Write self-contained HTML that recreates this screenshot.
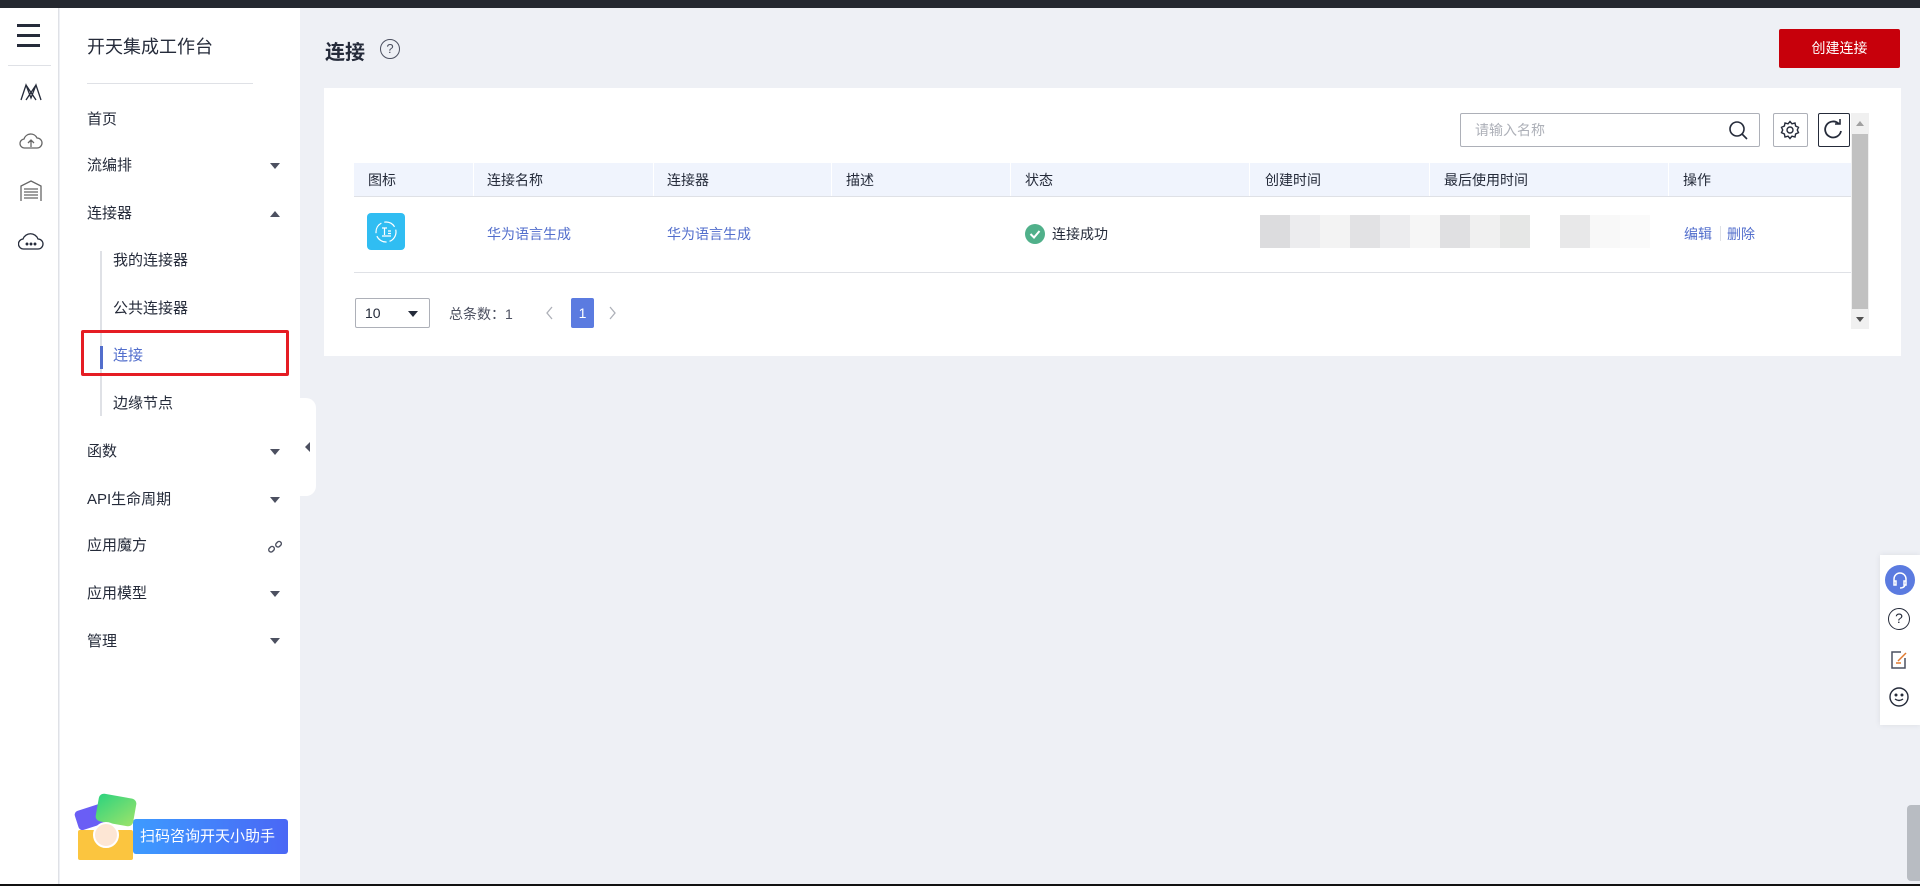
<!DOCTYPE html>
<html><head><meta charset="utf-8"><style>
*{margin:0;padding:0;box-sizing:border-box}
body{width:1920px;height:886px;overflow:hidden;background:#eef0f5;font-family:"Liberation Sans","Noto Sans CJK SC",sans-serif;color:#252b3a;position:relative}
.a{position:absolute}
.top{left:0;top:0;width:1920px;height:8px;background:#252830}
.bot{left:0;top:884px;width:1920px;height:2px;background:#111}
.rail{left:0;top:8px;width:59px;height:876px;background:#fff;border-right:1px solid #dfe1e6}
.side{left:60px;top:8px;width:240px;height:876px;background:#fff}
.mi{position:absolute;left:87px;font-size:15px;color:#252b3a;line-height:20px}
.si{position:absolute;left:113px;font-size:15px;color:#252b3a;line-height:20px}
.ar{position:absolute;left:270px;width:0;height:0;border-left:5px solid transparent;border-right:5px solid transparent;border-top:6px solid #4c5060}
.au{border-top:0;border-bottom:6px solid #4c5060}
.th{position:absolute;top:163px;height:34px;line-height:34px;font-size:14px;color:#252b3a}
.card{left:324px;top:88px;width:1577px;height:268px;background:#fff}
.lk{color:#526ecc;font-size:14px}
.bl{position:absolute;top:215px;height:33px;width:30px}
</style></head><body>
<div class="a top"></div>
<div class="a rail"></div>
<div class="a side"></div>
<div class="a" style="left:17px;top:24px;width:23px;height:3px;background:#252b3a"></div>
<div class="a" style="left:17px;top:34px;width:23px;height:3px;background:#252b3a"></div>
<div class="a" style="left:17px;top:44px;width:23px;height:3px;background:#252b3a"></div>
<div class="a" style="left:8px;top:65px;width:43px;height:1px;background:#dfe1e6"></div>
<svg class="a" style="left:19px;top:82px" width="24" height="20" viewBox="0 0 24 20" fill="none" stroke="#252b3a" stroke-width="1.3"><path d="M2 18 L7 3 L12 16 L17 3 L22 18 M7 3 L17 18 M17 3 L7 18"/></svg>
<svg class="a" style="left:19px;top:131px" width="24" height="20" viewBox="0 0 24 20" fill="none" stroke="#666" stroke-width="1.3"><path d="M6 17 H18 A5 5 0 0 0 18 7 A7 7 0 0 0 5 8 A4.5 4.5 0 0 0 6 17Z M12 16 V10 M9 12 L12 9 L15 12"/></svg>
<svg class="a" style="left:19px;top:180px" width="24" height="22" viewBox="0 0 24 22" fill="none" stroke="#666" stroke-width="1.3"><path d="M2 21 V6 L12 1 L22 6 V21 M5 9 H19 M5 12 H19 M5 15 H19 M5 18 H19"/></svg>
<svg class="a" style="left:18px;top:231px" width="26" height="20" viewBox="0 0 26 20" fill="none" stroke="#252b3a" stroke-width="1.3"><path d="M6 18 H20 A5 5 0 0 0 20 8 A8 8 0 0 0 5 8 A5 5 0 0 0 6 18Z"/><circle cx="9" cy="13" r=".8" fill="#252b3a"/><circle cx="13" cy="13" r=".8" fill="#252b3a"/><circle cx="17" cy="13" r=".8" fill="#252b3a"/></svg>
<div class="a" style="left:87px;top:33px;font-size:18px;color:#252b3a">开天集成工作台</div>
<div class="a" style="left:87px;top:83px;width:166px;height:1px;background:#dfe1e6"></div>
<div class="mi" style="top:110px">首页</div>
<div class="mi" style="top:156px">流编排</div><div class="ar" style="top:163px"></div>
<div class="mi" style="top:204px">连接器</div><div class="ar au" style="top:211px"></div>
<div class="a" style="left:100px;top:251px;width:2px;height:165px;background:#dfe1e6"></div>
<div class="si" style="top:251px">我的连接器</div>
<div class="si" style="top:299px">公共连接器</div>
<div class="a" style="left:100px;top:346px;width:3px;height:23px;background:#526ecc"></div>
<div class="si" style="top:346px;color:#526ecc">连接</div>
<div class="a" style="left:81px;top:330px;width:208px;height:46px;border:3px solid #e51c23;border-radius:2px"></div>
<div class="si" style="top:394px">边缘节点</div>
<div class="mi" style="top:442px">函数</div><div class="ar" style="top:449px"></div>
<div class="mi" style="top:490px">API生命周期</div><div class="ar" style="top:497px"></div>
<div class="mi" style="top:536px">应用魔方</div>
<svg class="a" style="left:267px;top:539px" width="16" height="16" viewBox="0 0 16 16" fill="none" stroke="#4c5060" stroke-width="1.4"><rect x="1.5" y="8" width="6" height="4.5" rx="2.2" transform="rotate(-45 4.5 10.2)"/><rect x="8.5" y="3" width="6" height="4.5" rx="2.2" transform="rotate(-45 11.5 5.2)"/></svg>
<div class="mi" style="top:584px">应用模型</div><div class="ar" style="top:591px"></div>
<div class="mi" style="top:632px">管理</div><div class="ar" style="top:638px"></div>
<div class="a" style="left:300px;top:398px;width:16px;height:98px;background:#fff;border-radius:0 10px 10px 0"></div>
<div class="a" style="left:305px;top:442px;width:0;height:0;border-top:5px solid transparent;border-bottom:5px solid transparent;border-right:5px solid #4c5060"></div>
<div class="a" style="left:133px;top:819px;width:155px;height:35px;border-radius:3px;background:linear-gradient(90deg,#3d9bff,#4a67f5);color:#fff;font-size:15px;line-height:35px;padding-left:7px">扫码咨询开天小助手</div>
<div class="a" style="left:76px;top:807px;width:30px;height:20px;background:#6a5ef5;border-radius:4px;transform:rotate(-18deg)"></div>
<div class="a" style="left:97px;top:796px;width:38px;height:28px;background:linear-gradient(135deg,#2dd37e,#9de36a);border-radius:5px;transform:rotate(10deg)"></div>
<div class="a" style="left:78px;top:830px;width:55px;height:30px;background:#fbc53f;border-radius:2px"></div>
<div class="a" style="left:93px;top:822px;width:26px;height:26px;border-radius:50%;background:#fde6d4;border:2px solid #fff"></div>
<div class="a" style="left:325px;top:36px;font-size:20px;font-weight:bold;color:#252b3a">连接</div>
<div class="a" style="left:380px;top:39px;width:20px;height:20px;border:1.5px solid #4c5060;border-radius:50%;font-size:13px;text-align:center;line-height:17px;color:#4c5060">?</div>
<div class="a" style="left:1779px;top:29px;width:121px;height:39px;background:#c7000b;border-radius:2px;color:#fff;font-size:14px;text-align:center;line-height:39px">创建连接</div>
<div class="a card"></div>
<div class="a" style="left:1460px;top:113px;width:300px;height:34px;border:1px solid #adb0b8;border-radius:2px;font-size:14px;color:#adb0b8;line-height:32px;padding-left:14px">请输入名称</div>
<svg class="a" style="left:1727px;top:119px" width="22" height="22" viewBox="0 0 22 22" fill="none" stroke="#252b3a" stroke-width="1.6"><circle cx="10" cy="10" r="7"/><path d="M15 15 L20 20"/></svg>
<div class="a" style="left:1773px;top:113px;width:35px;height:34px;border:1px solid #adb0b8;border-radius:2px"></div>
<svg class="a" style="left:1780px;top:120px" width="20" height="20" viewBox="0 0 20 20" fill="none" stroke="#252b3a" stroke-width="1.4"><circle cx="10" cy="10" r="3"/><path d="M10 1.5 L12 3.8 L15 3 L15.6 6 L18.5 7.3 L17.3 10 L18.5 12.7 L15.6 14 L15 17 L12 16.2 L10 18.5 L8 16.2 L5 17 L4.4 14 L1.5 12.7 L2.7 10 L1.5 7.3 L4.4 6 L5 3 L8 3.8Z"/></svg>
<div class="a" style="left:1818px;top:113px;width:32px;height:34px;border:1px solid #252b3a;border-radius:2px"></div>
<svg class="a" style="left:1823px;top:119px" width="22" height="22" viewBox="0 0 22 22" fill="none" stroke="#252b3a" stroke-width="1.8"><path d="M16 5 A8 8 0 1 0 18 12"/><path d="M12 5 H17 V0" stroke-width="1.6"/></svg>
<div class="a" style="left:1851px;top:113px;width:18px;height:216px;background:#f0f0f0"></div>
<div class="a" style="left:1852px;top:134px;width:16px;height:175px;background:#c1c1c1"></div>
<div class="a" style="left:1856px;top:121px;border-left:4px solid transparent;border-right:4px solid transparent;border-bottom:5px solid #a0a0a0;width:0;height:0"></div>
<div class="a" style="left:1856px;top:317px;border-left:4px solid transparent;border-right:4px solid transparent;border-top:5px solid #505050;width:0;height:0"></div>
<div class="a" style="left:354px;top:163px;width:1497px;height:34px;background:#f0f4fd;border-bottom:1px solid #dfe1e6"></div>
<div class="a" style="left:473px;top:163px;width:1px;height:33px;background:#fff"></div>
<div class="a" style="left:653px;top:163px;width:1px;height:33px;background:#fff"></div>
<div class="a" style="left:831px;top:163px;width:1px;height:33px;background:#fff"></div>
<div class="a" style="left:1010px;top:163px;width:1px;height:33px;background:#fff"></div>
<div class="a" style="left:1249px;top:163px;width:1px;height:33px;background:#fff"></div>
<div class="a" style="left:1429px;top:163px;width:1px;height:33px;background:#fff"></div>
<div class="a" style="left:1668px;top:163px;width:1px;height:33px;background:#fff"></div>
<div class="th" style="left:368px">图标</div>
<div class="th" style="left:487px">连接名称</div>
<div class="th" style="left:667px">连接器</div>
<div class="th" style="left:846px">描述</div>
<div class="th" style="left:1025px">状态</div>
<div class="th" style="left:1265px">创建时间</div>
<div class="th" style="left:1444px">最后使用时间</div>
<div class="th" style="left:1683px">操作</div>
<div class="a" style="left:354px;top:272px;width:1497px;height:1px;background:#dfe1e6"></div>
<div class="a" style="left:367px;top:213px;width:38px;height:37px;background:#30bdf2;border-radius:4px"></div>
<svg class="a" style="left:367px;top:213px" width="38" height="37" viewBox="0 0 38 37" fill="none" stroke="#fff" stroke-width="1.2"><circle cx="19" cy="19" r="10" stroke-dasharray="12 3"/><path d="M15 15 H20 M17.5 15 V22 M21 18 H24 M21 20.5 H24 M15 23 H24"/></svg>
<div class="a lk" style="left:487px;top:224px">华为语言生成</div>
<div class="a lk" style="left:667px;top:224px">华为语言生成</div>
<div class="a" style="left:1025px;top:224px;width:20px;height:20px;border-radius:50%;background:#50b08a"></div>
<svg class="a" style="left:1025px;top:224px" width="20" height="20" viewBox="0 0 20 20" fill="none" stroke="#fff" stroke-width="2"><path d="M5.5 10 L9 13.5 L14.5 7"/></svg>
<div class="a" style="left:1052px;top:224px;font-size:14px;color:#252b3a">连接成功</div>
<div class="bl" style="left:1260px;background:#dcdcde"></div>
<div class="bl" style="left:1290px;background:#ececee"></div>
<div class="bl" style="left:1320px;background:#f3f3f3"></div>
<div class="bl" style="left:1350px;background:#e2e2e4"></div>
<div class="bl" style="left:1380px;background:#ececee"></div>
<div class="bl" style="left:1410px;background:#f6f6f6"></div>
<div class="bl" style="left:1440px;background:#e0e0e2"></div>
<div class="bl" style="left:1470px;background:#f0f0f0"></div>
<div class="bl" style="left:1500px;background:#e6e7e6"></div>
<div class="bl" style="left:1560px;background:#e8e8e9"></div>
<div class="bl" style="left:1590px;background:#f8f8f8"></div>
<div class="bl" style="left:1620px;background:#fafafa"></div>
<div class="a lk" style="left:1684px;top:224px">编辑</div>
<div class="a" style="left:1720px;top:226px;width:1px;height:15px;background:#dfe1e6"></div>
<div class="a lk" style="left:1727px;top:224px">删除</div>
<div class="a" style="left:355px;top:298px;width:75px;height:30px;border:1px solid #adb0b8;border-radius:2px;font-size:14px;line-height:28px;padding-left:9px">10</div>
<div class="a" style="left:408px;top:311px;border-left:5px solid transparent;border-right:5px solid transparent;border-top:6px solid #252b3a;width:0;height:0"></div>
<div class="a" style="left:449px;top:304px;font-size:14px;color:#4c5060">总条数：1</div>
<svg class="a" style="left:545px;top:305px" width="10" height="16" viewBox="0 0 10 16" fill="none" stroke="#adb0b8" stroke-width="1.3"><path d="M7 2 L2 8 L7 14"/></svg>
<div class="a" style="left:571px;top:298px;width:23px;height:30px;background:#5b7be0;border-radius:2px;color:#fff;font-size:14px;text-align:center;line-height:30px">1</div>
<svg class="a" style="left:607px;top:305px" width="10" height="16" viewBox="0 0 10 16" fill="none" stroke="#adb0b8" stroke-width="1.3"><path d="M3 2 L8 8 L3 14"/></svg>
<div class="a" style="left:1880px;top:555px;width:40px;height:170px;background:#fff;box-shadow:0 0 6px rgba(0,0,0,.08)"></div>
<div class="a" style="left:1885px;top:565px;width:30px;height:30px;border-radius:50%;background:#5b7be0"></div>
<svg class="a" style="left:1890px;top:570px" width="20" height="20" viewBox="0 0 20 20" fill="none" stroke="#fff" stroke-width="1.5"><path d="M4 12 V9 A6 6 0 0 1 16 9 V12 M4 11 H6 V15 H4Z M14 11 H16 V15 H14Z M15 15 Q14 18 10 18"/></svg>
<div class="a" style="left:1888px;top:608px;width:22px;height:22px;border:1.5px solid #252b3a;border-radius:50%;font-size:14px;text-align:center;line-height:19px">?</div>
<svg class="a" style="left:1889px;top:649px" width="20" height="22" viewBox="0 0 20 22" fill="none" stroke="#4c5060" stroke-width="1.5"><path d="M12 3 H3 V19 H16 V9"/><path d="M7 14 H12 M9 12 L17 4" stroke="#e07a30"/></svg>
<svg class="a" style="left:1888px;top:686px" width="22" height="22" viewBox="0 0 22 22" fill="none" stroke="#252b3a" stroke-width="1.4"><circle cx="11" cy="11" r="9"/><circle cx="8" cy="9" r=".8"/><circle cx="14" cy="9" r=".8"/><path d="M7 13 Q11 16 15 13"/></svg>
<div class="a" style="left:1907px;top:805px;width:13px;height:76px;background:#b8bcc2;border-radius:4px 0 0 4px"></div>
<div class="a bot"></div>
</body></html>
